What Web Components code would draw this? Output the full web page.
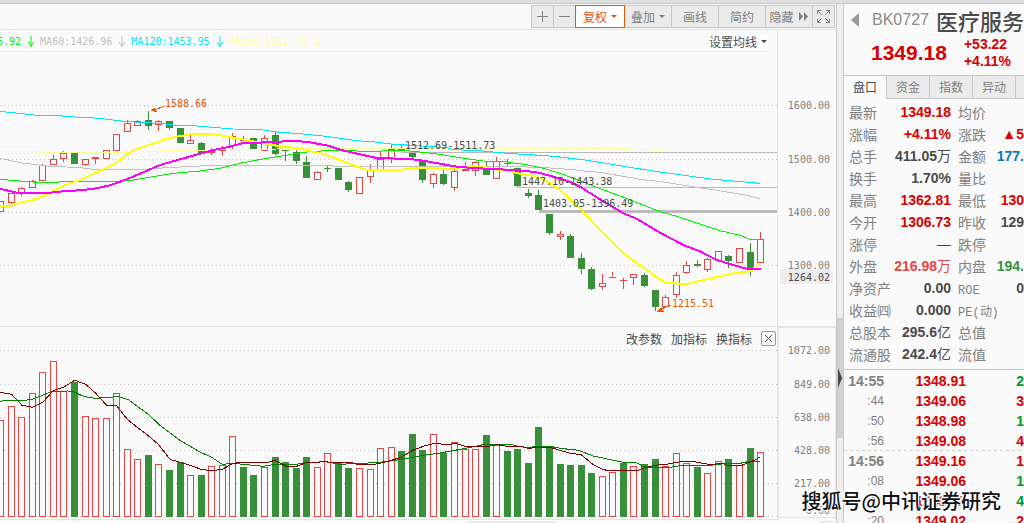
<!DOCTYPE html>
<html lang="zh-CN">
<head>
<meta charset="utf-8">
<title>医疗服务 BK0727</title>
<style>
html,body{margin:0;height:100%}
body{overflow:hidden;background:#fafafa;font-family:"Liberation Sans","Noto Sans CJK SC",sans-serif;font-size:12px;color:#4a4a4a}
</style>
</head>
<body>
<stock-app></stock-app>

<template id="t-app">
<style>
:host{display:flex;flex-direction:column;height:100vh;overflow:hidden;position:relative}
.strip{flex:none;height:3px;background:#dedede;border-bottom:1px solid #c8c8c8}
main{flex:1;min-height:0;display:grid;grid-template-columns:minmax(0,1fr) 7px 181px;grid-template-rows:minmax(0,1fr)}
.left{display:flex;flex-direction:column;min-width:0}
.mark{position:absolute;right:23px;bottom:8px;font:500 20px/28px "Noto Sans CJK SC",sans-serif;color:#111;text-shadow:-1px -1px 0 #fff,1px -1px 0 #fff,-1px 1px 0 #fff,1px 1px 0 #fff,-2px 0 0 #fff}
.foot{display:flex;justify-content:space-between;padding:1px 1px 0 466px}
.thumb{width:90px;height:4px;background:#ebebeb;border-radius:3px}
.mini{width:14px;height:6px;border:1px solid #ddd;border-radius:3px}
</style>
<div class="strip"></div>
<main>
  <div class="left">
    <chart-toolbar>
      <tool-button small label="放大"><svg width="13" height="13"><path d="M6.500 1V12M1 6.500H12" stroke="#808080"/></svg></tool-button>
      <tool-button small label="缩小"><svg width="13" height="13"><path d="M1 6.500H12" stroke="#808080"/></svg></tool-button>
      <tool-button active menu>复权</tool-button>
      <tool-button menu>叠加</tool-button>
      <tool-button>画线</tool-button>
      <tool-button>简约</tool-button>
      <tool-button>隐藏<svg width="11" height="9" fill="#808080"><path d="M1 0L5 4.500L1 9zM6 0L10 4.500L6 9z"/></svg></tool-button>
      <tool-button small label="全屏"><svg width="15" height="15" fill="none" stroke="#808080"><path d="M1.500 5V1.500H5M1.500 1.500L5.500 5.500M10 1.500H13.500V5M13.500 1.500L9.500 5.500M1.500 10V13.500H5M1.500 13.500L5.500 9.500M13.500 10V13.500H10M13.500 13.500L9.500 9.500"/></svg></tool-button>
    </chart-toolbar>
    <price-pane></price-pane>
    <volume-pane></volume-pane>
    <div class="foot"><div class="thumb"></div><div class="mini"></div></div>
  </div>
  <side-gutter></side-gutter>
  <quote-panel></quote-panel>
</main>
<div class="mark">搜狐号@中讯证券研究</div>
</template>

<template id="t-toolbar">
<style>
:host{display:flex;justify-content:flex-end;padding:1px 1px 1px 0;border-bottom:1px solid #e4e4e4}
</style>
<slot></slot>
</template>

<template id="t-button">
<style>
:host{display:block;width:48px;margin-left:-1px;position:relative}
:host([small]){width:23px}
:host([active]){width:50px;z-index:1}
button{box-sizing:border-box;width:100%;height:23px;padding:0;border:1px solid #c8c8c8;background:#ebebeb;display:flex;align-items:center;justify-content:center;gap:4px;font:12px/20px "Noto Sans CJK SC",sans-serif;color:#808080;white-space:nowrap}
:host([active]) button{border-color:#e85500;background:#fff;color:#e85500}
.caret{display:none;border:3px solid transparent;border-top-color:currentColor;border-bottom:0}
:host([menu]) .caret{display:block}
</style>
<button type="button"><slot></slot><i class="caret"></i></button>
</template>

<template id="t-price">
<style>
:host{display:grid;grid-template-columns:minmax(0,1fr) 59px;border-bottom:1px solid #e4e4e4}
.plot{min-width:0;overflow:hidden}
.legend{display:flex;align-items:center;justify-content:space-between;height:19px;padding-top:2px;margin-right:9px;border-bottom:1px solid #ececec;overflow:hidden}
.ma{display:flex;align-items:center;margin-left:-3px;font:10px/14px "DejaVu Sans Mono",monospace;white-space:nowrap}
.ma span{display:flex;align-items:center;gap:6px;margin-right:5px}
.ma svg{fill:none;stroke:currentColor}
button{border:0;padding:0;background:#fff;display:flex;align-items:center;gap:4px;font:12px/14px "Noto Sans CJK SC",sans-serif;color:#4a4a4a;white-space:nowrap}
i{border:3px solid transparent;border-top-color:currentColor;border-bottom:0;margin-right:1px}
svg{display:block}
.axis{border-left:1px solid #e4e4e4}
</style>
<div class="plot">
  <div class="legend"><div class="ma"></div><button type="button">设置均线<i></i></button></div>
  <svg class="chart" width="100%" height="274"></svg>
</div>
<svg class="axis" width="58" height="296"></svg>
</template>

<template id="t-volume">
<style>
:host{display:grid;grid-template-columns:minmax(0,1fr) 59px}
.plot{min-width:0;overflow:hidden}
.bar{display:flex;justify-content:flex-end;align-items:center;gap:9px;height:21px;padding:2px 1px 0 0;box-sizing:border-box}
button{border:0;padding:0;background:none;font:12px/16px "Noto Sans CJK SC",sans-serif;color:#4a4a4a;white-space:nowrap}
.close{width:15px;height:15px;border:1px solid #999;border-radius:2px}
svg{display:block}
.axis{box-sizing:border-box;border-left:2px solid #e4e4e4;border-right:1px solid #e4e4e4;border-top:1px solid #e4e4e4}
</style>
<div class="plot">
  <div class="bar"><button type="button">改参数</button><button type="button">加指标</button><button type="button">换指标</button><button type="button" class="close" aria-label="关闭"><svg width="13" height="13"><path d="M3 3L10 10M10 3L3 10" stroke="#4a4a4a"/></svg></button></div>
  <svg class="chart" width="100%" height="172"></svg>
</div>
<svg class="axis" width="59" height="193"></svg>
</template>

<template id="t-gutter">
<style>
:host{display:flex;flex-direction:column;background:#efefef;border-left:1px solid #c8c8c8}
.gap{flex:0 0 314px}
.bar{flex:0 0 120px;background:#d0d0d0;display:flex;align-items:center}
</style>
<div class="gap"></div><div class="bar"><svg width="6" height="20"><path d="M1 0L5 10L1 20z" fill="#444"/></svg></div>
</template>

<template id="t-quote">
<style>
:host{display:block;min-width:0;overflow:hidden;border-left:1px solid #c8c8c8;background:#fafafa}
header{height:72px;box-sizing:border-box;border-bottom:1px solid #c8c8c8;overflow:hidden}
.name{display:flex;align-items:center;height:32px;padding-left:6px;white-space:nowrap}
.name button{border:0;background:none;padding:0;width:22px;height:16px;display:flex}
.code{font-size:16px;color:#8a8a8a;width:64px}
.title{font:500 22px/32px "Noto Sans CJK SC",sans-serif;color:#4a4a4a}
.now{display:flex;align-items:center;padding-left:27px;gap:17px;color:#d80000;font-weight:bold}
.big{font-size:21px}
.chg{font-size:14px;line-height:17px}
nav{display:flex;background:#ebebeb}
nav button{flex:0 0 43px;height:23px;box-sizing:border-box;padding:0;border:0;border-right:1px solid #c8c8c8;border-bottom:1px solid #c8c8c8;background:#ebebeb;color:#808080;font:12px/20px "Noto Sans CJK SC",sans-serif}
nav button.on{background:#fafafa;color:#4a4a4a;border-bottom-color:#fafafa;}
nav span{flex:1;border-bottom:1px solid #c8c8c8}
table{border-collapse:collapse;width:100%;white-space:nowrap}
.data{margin:2px 0 4px}
th,td{padding:0;font-size:14px}
.data tr{height:22px}
.data th,.data td{line-height:22px}
.data th{font:14px/22px "Noto Sans CJK SC",sans-serif;color:#808080;text-align:left}
.data th:first-child{padding-left:5px;width:42px}
.data td:nth-child(2){width:60px}
.data th:nth-child(3){padding-left:7px}
.data td,.tick td{text-align:right;font-weight:bold}
.data small{font:12px "Liberation Mono",monospace}
.data b{font-weight:normal}
.r{color:#d80000}.k{color:#4a4a4a}.l{color:#e84545}.g{color:#38913a}.b{color:#0078d0}.n{color:#009a20}
.tick{border-top:1px solid #c8c8c8}
.tick tr{height:20px}
.tick td{line-height:18px;padding-top:2px}
.tick th{width:40px;text-align:right;color:#808080;padding-top:2px;font:12px/18px "Liberation Sans",sans-serif}
.tick th.m{font-size:14px;font-weight:bold}
.tick td:nth-child(2){width:82px}
.tick .dash{background:repeating-linear-gradient(90deg,#ccc 0 3px,transparent 3px 6px) 0 0/100% 1px no-repeat}
</style>
<header>
  <div class="name"><button type="button" aria-label="返回"><svg width="10" height="16"><path d="M9 1V15L1 8z" fill="#999"/></svg></button><span class="code">BK0727</span><span class="title">医疗服务</span></div>
  <div class="now"><span class="big">1349.18</span><div class="chg"><div>+53.22</div><div>+4.11%</div></div></div>
</header>
<nav><button type="button" class="on">盘口</button><button type="button">资金</button><button type="button">指数</button><button type="button">异动</button><span></span></nav>
<table class="data"></table>
<table class="tick"></table>
</template>

<script>
const tpl=id=>document.getElementById(id).content.cloneNode(true);
class Base extends HTMLElement{
  constructor(){super();this.attachShadow({mode:'open'}).append(tpl(this.constructor.tpl));}
  $(s){return this.shadowRoot.querySelector(s);}
}
const MONO='font-family="DejaVu Sans Mono,monospace" font-size="10"';
const cx=i=>Math.floor(.6+i*10.555)+.5;
const third=v=>Math.round(v/3);
// Series are stored in thirds of a pixel: [x,y, x,y, ...]
const line=(p,dy,color,w=1)=>{
  let d='';for(let i=0;i<p.length;i+=2)d+=(i?'L':'M')+(p[i]/3).toFixed(1)+' '+(p[i+1]/3+dy).toFixed(1);
  return `<path d="${d}" fill="none" stroke="${color}" stroke-width="${w}"/>`;};
const dots=ys=>ys.map(y=>`<path d="M-2000 ${y}.5H777" stroke="#c4c4c4" stroke-dasharray="1 3"/>`).join('');
// Drawing is anchored to the right edge, the newest bar always stays visible
const anchor=(top,body)=>`<svg x="100%" overflow="visible"><g transform="translate(-777 ${-top})">${body}</g></svg>`;
const axisText=(rows,top,x)=>rows.map(([y,t])=>`<text x="${x}" y="${y+4-top}" text-anchor="end" ${MONO} fill="#808080">${t}</text>`).join('');

const CANDLES=`r604,635,604,635 r580,608,580,612 r565,583,560,587 r544,563,540,563 r496,542,492,542 r478,494,465,494 r459,476,453,487 g459,492,459,492
r478,494,478,498 r472,478,472,491 r451,476,451,476 r403,452,403,452 r370,395,360,395 r364,377,360,377 g360,378,333,390 r364,376,360,392
g363,384,363,389 g384,430,384,430 r421,431,405,431 g430,459,426,459 r452,458,444,465 r446,453,437,468 r408,438,399,447 r417,423,407,423
g414,447,414,447 r415,452,405,452 g405,462,395,465 g450,452,450,483 g457,483,450,492 g487,534,468,534 r517,539,513,539 g504,507,497,516
g504,540,504,540 g546,570,542,576 r530,583,530,583 r506,532,492,548 r476,514,454,514 r447,476,432,488 r448,451,435,451 g457,471,455,475
g481,540,481,548 r523,551,519,564 g522,552,510,555 r514,563,507,573 r508,514,486,514 r487,514,484,527 g505,525,484,525 r483,536,471,536
r489,492,477,498 g505,558,505,562 g579,588,567,593 g585,630,570,630 g642,699,642,705 r703,712,693,720 g708,773,702,773 g774,807,760,822
g807,867,801,870 r849,860,822,869 r831,833,816,833 r839,844,834,866 r823,835,823,856 g825,858,819,862 g870,920,870,933 r892,922,885,922
r826,884,816,893 r796,818,783,822 g792,797,780,801 r778,811,774,815 r754,783,754,783 g768,782,765,804 r743,790,743,790 g756,805,730,828
r718,788,696,788`.split(/\s+/);
const VOL=`r420 r406 r417 r393 r372 r361 r391 g382 r416 r418 r418 r393 r449 r459 g455 r464 g470 g462 r475 g475 r466 r465 r436 g467 g475 r467 g457 g462 g468 g457 r467 r453 g463 g468 r468 r469 r448 r447 g451 g434 g450 r434 g453 r442 r449 r449 g435 r445 g451 g449 g463 g427 g447 g464 g465 g465 g473 r476 r472 g463 r466 g464 g459 r466 r453 r463 g467 r473 r461 g459 r465 g448 r452`.split(' ');
const RED='#e84545',GREEN='#38913a';
const candle=(c,i)=>{
  const [a,b,h,l]=c.slice(1).split(',').map(third),x=cx(i);
  if(c[0]==='g')return `<path d="M${x} ${h}V${l}" stroke="${GREEN}"/><rect x="${x-3.5}" y="${a}" width="7" height="${Math.max(1,b-a)}" fill="${GREEN}"/>`;
  const wick=`<path d="M${x} ${h}V${a}M${x} ${b}V${l}" stroke="${RED}"/>`;
  return wick+(b-a<2?`<rect x="${x-3.5}" y="${a}" width="7" height="1" fill="${RED}"/>`:`<rect x="${x-3}" y="${a+.5}" width="6" height="${b-a-1}" fill="none" stroke="${RED}"/>`);
};
const MA={
 m250:[0,455,110,455,120,458,365,458,420,454,540,452,680,449,830,447,1020,446,1800,444,1900,447,1990,452],
 m120:[0,334,110,346,175,347,240,352,300,355,370,364,440,368,490,371,530,376,590,378,650,383,700,387,775,388,830,396,900,401,970,408,1020,415,1070,422,1125,426,1180,433,1220,435,1280,439,1340,443,1360,449,1440,452,1520,460,1590,464,1660,469,1740,478,1800,487,1945,511,2060,527,2140,538,2280,550],
 m60:[0,475,60,488,140,498,240,503,290,509,430,508,500,503,640,496,960,496,1020,499,1580,501,1650,504,1720,509,1760,514,1800,517,1920,538,1990,546,2090,562,2170,574,2240,586,2280,596],
 m30:[0,538,60,543,110,547,175,547,185,544,350,544,400,540,460,530,520,520,600,513,660,505,720,490,800,475,860,466,910,457,990,451,1020,452,1120,454,1210,451,1260,456,1320,463,1380,473,1450,483,1520,486,1580,494,1630,505,1680,520,1740,542,1780,558,1870,592,1970,631,2040,652,2110,675,2160,692,2220,706,2250,718,2280,720],
 m20:[0,566,50,578,150,578,190,574,250,570,290,565,330,556,380,538,430,517,480,495,540,478,600,461,650,448,690,440,730,429,810,427,880,422,930,427,985,437,1020,449,1080,463,1130,474,1230,477,1270,482,1330,493,1370,500,1420,504,1520,509,1580,513,1620,519,1670,533,1710,545,1740,560,1800,598,1870,640,1910,656,1980,698,2050,735,2100,754,2150,780,2200,795,2240,806,2283,806],
 m10:[0,618,35,617,60,608,100,600,140,584,190,557,240,541,290,517,340,494,400,450,450,434,500,416,570,403,640,403,670,407,720,417,830,437,900,446,970,462,1020,480,1050,492,1100,509,1200,510,1240,504,1280,505,1360,506,1400,499,1450,500,1480,508,1520,511,1560,521,1600,527,1640,543,1680,569,1740,625,1790,680,1870,760,1940,810,1995,848,2060,852,2120,838,2180,824,2250,813,2280,793]
};
const VA=[0,217,35,223,66,256,97,262,128,247,160,212,190,202,224,181,257,193,287,220,320,256,350,257,382,298,412,322,445,347,475,373,510,418,540,427,570,436,603,448,635,452,667,448,697,431,715,428,800,428,825,421,858,439,890,439,915,429,975,425,1000,428,1055,428,1072,433,1125,433,1148,428,1175,421,1205,411,1238,391,1270,379,1300,371,1345,373,1370,371,1395,379,1465,379,1490,374,1520,379,1560,379,1585,385,1620,382,1650,382,1680,391,1710,400,1744,404,1778,433,1808,448,1825,452,1910,452,1935,443,1965,436,2000,433,2025,428,2050,424,2075,424,2125,433,2170,431,2180,436,2225,436,2240,430,2265,420,2280,411];
const VB=[0,244,20,241,75,241,97,238,125,227,155,214,205,213,225,217,250,229,285,235,335,232,352,229,385,239,445,283,480,316,540,361,600,396,635,412,667,433,700,430,730,433,790,439,825,433,890,433,915,428,975,425,1005,430,1020,433,1060,431,1125,428,1165,424,1205,418,1265,407,1320,399,1365,391,1405,383,1455,373,1530,373,1560,380,1585,382,1620,379,1650,379,1680,385,1735,391,1780,408,1840,421,1870,427,1910,428,1930,438,1950,443,2005,443,2040,437,2140,435,2170,431,2220,430,2250,424,2280,424];

class StockApp extends Base{static tpl='t-app'}
class ChartToolbar extends Base{static tpl='t-toolbar'}
class ToolButton extends Base{static tpl='t-button';
  connectedCallback(){const l=this.getAttribute('label');if(l)this.$('button').setAttribute('aria-label',l);}}
class SideGutter extends Base{static tpl='t-gutter'}
class PricePane extends Base{static tpl='t-price';
  connectedCallback(){
    const arrow='<svg width="8" height="14"><path d="M4 1V12M1 7L4 11L7 7" /></svg>';
    this.$('.ma').innerHTML=[['6.92','#00f000'],['MA60:1426.96','#c0c0c0'],['MA120:1453.95','#00e5ff'],['MA250:1511.70','#ffffa0']]
      .map(([t,c])=>`<span style="color:${c}">${t}${arrow}</span>`).join('');
    const label=(x,y,t,c='#4a4a4a')=>`<text x="${x}" y="${y+4}" ${MONO} fill="${c}">${t}</text>`;
    this.$('.chart').innerHTML=anchor(52,
      `<g shape-rendering="crispEdges">${dots([105,159,212,265])}${CANDLES.map(candle).join('')}
      ${line(MA.m250,0,'#ffffa0')}
      <path d="M401 152.500H777M518 187.500H777" stroke="#b8b8b8"/><rect x="539" y="210" width="238" height="3" fill="#bbb"/>
      ${line(MA.m120,0,'#00e5ff')}${line(MA.m60,0,'#c0c0c0')}${line(MA.m30,0,'#00f000')}${line(MA.m10,0,'#ffff00',2)}${line(MA.m20,0,'#ff00ff',2)}
      <path d="M150 111L155 108L157 112zM656 312L661 308L664 312z" fill="#e85500"/><path d="M155 110L164 106M661 309L671 305" stroke="#e85500"/></g>
      ${label(165,103,'1588.66','#e85500')}${label(672,303,'1215.51','#e85500')}
      ${label(405,145,'1512.69-1511.73')}${label(522,181,'1447.10-1443.38')}${label(543,203,'1403.05-1396.49')}`);
    this.$('.axis').innerHTML=`<rect x="2" y="239" width="53" height="15" rx="3" fill="#ededed"/>`
      +axisText([[105,'1600.00'],[159,'1500.00'],[212,'1400.00'],[265,'1300.00']],30,52)
      +`<text x="52" y="251" text-anchor="end" ${MONO} fill="#4a4a4a">1264.02</text>`;
  }}
class VolumePane extends Base{static tpl='t-volume';
  connectedCallback(){
    const bars=VOL.map((v,i)=>{const y=+v.slice(1),x=cx(i);
      return v[0]==='g'?`<rect x="${x-3.5}" y="${y}" width="7" height="${517-y}" fill="${GREEN}"/>`
        :`<rect x="${x-3}" y="${y+.5}" width="6" height="${516-y}" fill="#fafafa" stroke="${RED}"/>`;}).join('');
    this.$('.chart').innerHTML=anchor(348,`<g shape-rendering="crispEdges">${dots([350,384,417,450,483,516])}${bars}
      ${line(VB,320,'#008000')}${line(VA,320,'#800000')}
      <path d="M-2000 519.500H777M169.500 518V520M412.500 518V520M613.500 518V520" stroke="#e4e4e4"/></g>`);
    this.$('.axis').innerHTML=axisText([[350,'1072.00'],[384,'849.00'],[417,'638.00'],[450,'428.00'],[483,'217.00'],[510,'0.00']],328,51)
      +'<path d="M0 189.500H58" stroke="#e4e4e4"/>';
  }}
class QuotePanel extends Base{static tpl='t-quote';
  connectedCallback(){
    const rows=[
     ['最新','r','1349.18','均价'],['涨幅','r','+4.11%','涨跌','r','▲5'],['总手','k','411.05<b>万</b>','金额','b','177.'],
     ['换手','k','1.70%','量比'],['最高','r','1362.81','最低','r','130'],['今开','r','1306.73','昨收','k','129'],
     ['涨停','r','<b>—</b>','跌停'],['外盘','l','216.98<b>万</b>','内盘','g','194.'],['净资产','k','0.00','<small>ROE</small>','k','0'],
     ['收益㈣','k','0.000','<small>PE(动)</small>'],['总股本','k','295.6<b>亿</b>','总值'],['流通股','k','242.4<b>亿</b>','流值']];
    this.$('.data').innerHTML='<tbody>'+rows.map(r=>`<tr><th scope="row">${r[0]}</th><td class="${r[1]}">${r[2]}</td>`
      +(r[5]?`<th scope="row">${r[3]}</th><td class="${r[4]}">${r[5]}</td>`:`<th scope="row" colspan="2">${r[3]}</th>`)+'</tr>').join('')+'</tbody>';
    const ticks=[['14:55','1348.91','n',2],[':44','1349.06','r',3],[':50','1348.98','n',1],[':56','1349.08','r',4],
      ['14:56','1349.16','r',1],[':08','1349.06','n',1],[':14','1348.92','n',4],[':20','1349.02','r',2]];
    this.$('.tick').innerHTML='<tbody>'+ticks.map((t,i)=>`<tr class="${i===4?'dash':''}"><th scope="row" class="${t[0][0]===':'?'':'m'}">${t[0]}</th><td class="r">${t[1]}</td><td class="${t[2]}">${t[3]}</td></tr>`).join('')+'</tbody>';
  }}
customElements.define('tool-button',ToolButton);
customElements.define('chart-toolbar',ChartToolbar);
customElements.define('price-pane',PricePane);
customElements.define('volume-pane',VolumePane);
customElements.define('side-gutter',SideGutter);
customElements.define('quote-panel',QuotePanel);
customElements.define('stock-app',StockApp);
</script>
</body>
</html>
